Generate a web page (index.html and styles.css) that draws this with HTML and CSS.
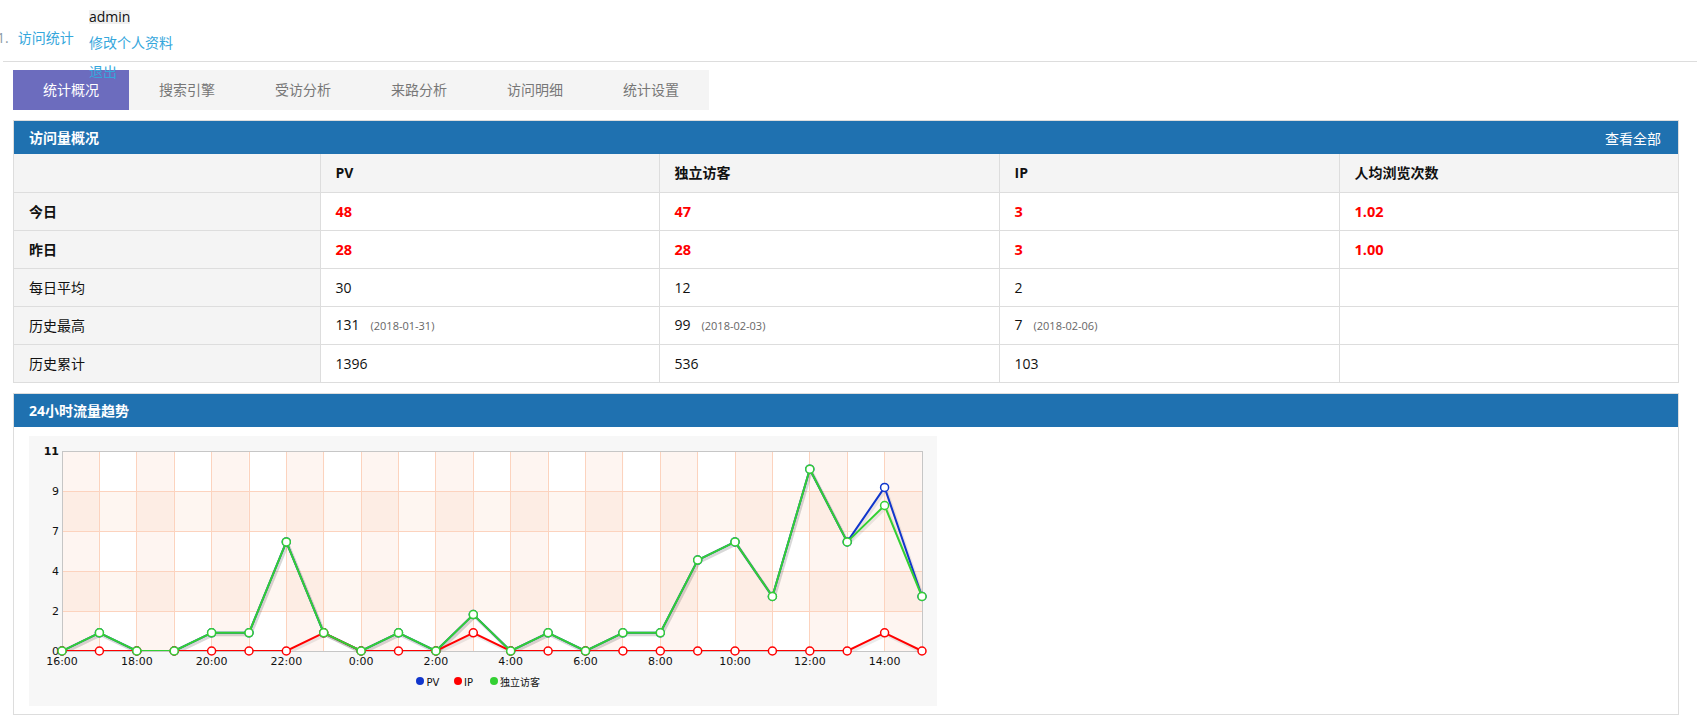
FILE: index.html
```html
<!DOCTYPE html>
<html lang="zh-CN">
<head>
<meta charset="utf-8">
<title>访问统计</title>
<link rel="stylesheet" href="styles.css">
</head>
<body>
<header class="topbar">
  <nav class="mainnav"><span class="idx">1.</span><a href="#">访问统计</a></nav>
  <ul class="usermenu">
    <li><span class="uname">admin</span></li>
    <li><a href="#">修改个人资料</a></li>
    <li><a href="#">退出</a></li>
  </ul>
</header>
<div class="wrap">
  <div class="tabs">
    <a class="tab active" href="#">统计概况</a>
    <a class="tab" href="#">搜索引擎</a>
    <a class="tab" href="#">受访分析</a>
    <a class="tab" href="#">来路分析</a>
    <a class="tab" href="#">访问明细</a>
    <a class="tab" href="#">统计设置</a>
  </div>

  <section class="panel">
    <div class="panel-hd"><h3>访问量概况</h3><a href="#">查看全部</a></div>
    <table class="stats">
      <colgroup><col class="c1"><col class="c2"><col class="c3"><col class="c4"><col class="c5"></colgroup>
      <tr class="head"><th></th><th>PV</th><th>独立访客</th><th>IP</th><th>人均浏览次数</th></tr>
      <tr><th class="label">今日</th><td class="hot">48</td><td class="hot">47</td><td class="hot">3</td><td class="hot">1.02</td></tr>
      <tr><th class="label">昨日</th><td class="hot">28</td><td class="hot">28</td><td class="hot">3</td><td class="hot">1.00</td></tr>
      <tr><td class="label">每日平均</td><td>30</td><td>12</td><td>2</td><td></td></tr>
      <tr><td class="label">历史最高</td><td>131<small class="date">(2018-01-31)</small></td><td>99<small class="date">(2018-02-03)</small></td><td>7<small class="date">(2018-02-06)</small></td><td></td></tr>
      <tr><td class="label">历史累计</td><td>1396</td><td>536</td><td>103</td><td></td></tr>
    </table>
  </section>

  <section class="panel">
    <div class="panel-hd"><h3>24小时流量趋势</h3></div>
    <div class="panel-bd">
      <div class="chart">
        <svg width="908" height="270" viewBox="0 0 908 270" xmlns="http://www.w3.org/2000/svg">
          <defs>
            <pattern id="vstripe" x="33" y="0" width="74.7826" height="270" patternUnits="userSpaceOnUse">
              <rect x="0" y="0" width="37.3913" height="270" fill="#f7a27a" fill-opacity="0.1"/>
            </pattern>
            <clipPath id="plotclip"><rect x="33" y="15" width="861" height="200"/></clipPath>
          </defs>
          <rect x="33" y="15" width="861" height="200" fill="#fff"/>
          <rect x="33" y="15" width="861" height="200" fill="url(#vstripe)"/>
          <rect x="33" y="55" width="861" height="40" fill="#f7a27a" fill-opacity="0.1"/>
          <rect x="33" y="135" width="861" height="40" fill="#f7a27a" fill-opacity="0.1"/>
          <path class="grid" d="M70.5 15V215M107.5 15V215M145.5 15V215M182.5 15V215M220.5 15V215M257.5 15V215M294.5 15V215M332.5 15V215M369.5 15V215M406.5 15V215M444.5 15V215M481.5 15V215M519.5 15V215M556.5 15V215M593.5 15V215M631.5 15V215M668.5 15V215M706.5 15V215M743.5 15V215M780.5 15V215M818.5 15V215M855.5 15V215M33 55.5H893M33 95.5H893M33 135.5H893M33 175.5H893"/>
          <rect class="axis" x="33.5" y="15.5" width="860" height="200"/>

          <g class="ylab">
            <text x="30" y="219">0</text>
            <text x="30" y="179">2</text>
            <text x="30" y="139">4</text>
            <text x="30" y="99">7</text>
            <text x="30" y="59">9</text>
            <text x="30" y="19" class="bold">11</text>
          </g>
          <g class="xlab">
            <text x="33" y="229">16:00</text>
            <text x="107.8" y="229">18:00</text>
            <text x="182.6" y="229">20:00</text>
            <text x="257.3" y="229">22:00</text>
            <text x="332.1" y="229">0:00</text>
            <text x="406.9" y="229">2:00</text>
            <text x="481.7" y="229">4:00</text>
            <text x="556.5" y="229">6:00</text>
            <text x="631.3" y="229">8:00</text>
            <text x="706" y="229">10:00</text>
            <text x="780.8" y="229">12:00</text>
            <text x="855.6" y="229">14:00</text>
          </g>

          <g clip-path="url(#plotclip)">
            <g class="shadow" transform="translate(1.5,2)">
              <polyline points="33,215 70.4,196.8 107.8,215 145.2,215 182.6,196.8 220,196.8 257.3,105.9 294.7,196.8 332.1,215 369.5,196.8 406.9,215 444.3,178.6 481.7,215 519.1,196.8 556.5,215 593.9,196.8 631.3,196.8 668.7,124.1 706,105.9 743.4,160.5 780.8,33.2 818.2,105.9 855.6,51.4 893,160.5"/>
              <polyline points="33,215 70.4,215 107.8,215 145.2,215 182.6,215 220,215 257.3,215 294.7,196.8 332.1,215 369.5,215 406.9,215 444.3,196.8 481.7,215 519.1,215 556.5,215 593.9,215 631.3,215 668.7,215 706,215 743.4,215 780.8,215 818.2,215 855.6,196.8 893,215"/>
              <polyline points="33,215 70.4,196.8 107.8,215 145.2,215 182.6,196.8 220,196.8 257.3,105.9 294.7,196.8 332.1,215 369.5,196.8 406.9,215 444.3,178.6 481.7,215 519.1,196.8 556.5,215 593.9,196.8 631.3,196.8 668.7,124.1 706,105.9 743.4,160.5 780.8,33.2 818.2,105.9 855.6,69.5 893,160.5"/>
            </g>
            <polyline class="line pv" points="33,215 70.4,196.8 107.8,215 145.2,215 182.6,196.8 220,196.8 257.3,105.9 294.7,196.8 332.1,215 369.5,196.8 406.9,215 444.3,178.6 481.7,215 519.1,196.8 556.5,215 593.9,196.8 631.3,196.8 668.7,124.1 706,105.9 743.4,160.5 780.8,33.2 818.2,105.9 855.6,51.4 893,160.5"/>
          </g>
          <g class="dots pv">
            <circle cx="33" cy="215" r="4"/><circle cx="70.4" cy="196.8" r="4"/><circle cx="107.8" cy="215" r="4"/><circle cx="145.2" cy="215" r="4"/><circle cx="182.6" cy="196.8" r="4"/><circle cx="220" cy="196.8" r="4"/><circle cx="257.3" cy="105.9" r="4"/><circle cx="294.7" cy="196.8" r="4"/><circle cx="332.1" cy="215" r="4"/><circle cx="369.5" cy="196.8" r="4"/><circle cx="406.9" cy="215" r="4"/><circle cx="444.3" cy="178.6" r="4"/><circle cx="481.7" cy="215" r="4"/><circle cx="519.1" cy="196.8" r="4"/><circle cx="556.5" cy="215" r="4"/><circle cx="593.9" cy="196.8" r="4"/><circle cx="631.3" cy="196.8" r="4"/><circle cx="668.7" cy="124.1" r="4"/><circle cx="706" cy="105.9" r="4"/><circle cx="743.4" cy="160.5" r="4"/><circle cx="780.8" cy="33.2" r="4"/><circle cx="818.2" cy="105.9" r="4"/><circle cx="855.6" cy="51.4" r="4"/><circle cx="893" cy="160.5" r="4"/>
          </g>
          <g clip-path="url(#plotclip)">
            <polyline class="line ip" points="33,215 70.4,215 107.8,215 145.2,215 182.6,215 220,215 257.3,215 294.7,196.8 332.1,215 369.5,215 406.9,215 444.3,196.8 481.7,215 519.1,215 556.5,215 593.9,215 631.3,215 668.7,215 706,215 743.4,215 780.8,215 818.2,215 855.6,196.8 893,215"/>
          </g>
          <g class="dots ip">
            <circle cx="33" cy="215" r="4"/><circle cx="70.4" cy="215" r="4"/><circle cx="107.8" cy="215" r="4"/><circle cx="145.2" cy="215" r="4"/><circle cx="182.6" cy="215" r="4"/><circle cx="220" cy="215" r="4"/><circle cx="257.3" cy="215" r="4"/><circle cx="294.7" cy="196.8" r="4"/><circle cx="332.1" cy="215" r="4"/><circle cx="369.5" cy="215" r="4"/><circle cx="406.9" cy="215" r="4"/><circle cx="444.3" cy="196.8" r="4"/><circle cx="481.7" cy="215" r="4"/><circle cx="519.1" cy="215" r="4"/><circle cx="556.5" cy="215" r="4"/><circle cx="593.9" cy="215" r="4"/><circle cx="631.3" cy="215" r="4"/><circle cx="668.7" cy="215" r="4"/><circle cx="706" cy="215" r="4"/><circle cx="743.4" cy="215" r="4"/><circle cx="780.8" cy="215" r="4"/><circle cx="818.2" cy="215" r="4"/><circle cx="855.6" cy="196.8" r="4"/><circle cx="893" cy="215" r="4"/>
          </g>
          <g clip-path="url(#plotclip)">
            <polyline class="line uv" points="33,215 70.4,196.8 107.8,215 145.2,215 182.6,196.8 220,196.8 257.3,105.9 294.7,196.8 332.1,215 369.5,196.8 406.9,215 444.3,178.6 481.7,215 519.1,196.8 556.5,215 593.9,196.8 631.3,196.8 668.7,124.1 706,105.9 743.4,160.5 780.8,33.2 818.2,105.9 855.6,69.5 893,160.5"/>
          </g>
          <g class="dots uv">
            <circle cx="33" cy="215" r="4"/><circle cx="70.4" cy="196.8" r="4"/><circle cx="107.8" cy="215" r="4"/><circle cx="145.2" cy="215" r="4"/><circle cx="182.6" cy="196.8" r="4"/><circle cx="220" cy="196.8" r="4"/><circle cx="257.3" cy="105.9" r="4"/><circle cx="294.7" cy="196.8" r="4"/><circle cx="332.1" cy="215" r="4"/><circle cx="369.5" cy="196.8" r="4"/><circle cx="406.9" cy="215" r="4"/><circle cx="444.3" cy="178.6" r="4"/><circle cx="481.7" cy="215" r="4"/><circle cx="519.1" cy="196.8" r="4"/><circle cx="556.5" cy="215" r="4"/><circle cx="593.9" cy="196.8" r="4"/><circle cx="631.3" cy="196.8" r="4"/><circle cx="668.7" cy="124.1" r="4"/><circle cx="706" cy="105.9" r="4"/><circle cx="743.4" cy="160.5" r="4"/><circle cx="780.8" cy="33.2" r="4"/><circle cx="818.2" cy="105.9" r="4"/><circle cx="855.6" cy="69.5" r="4"/><circle cx="893" cy="160.5" r="4"/>
          </g>

          <g class="legend">
            <circle cx="391" cy="245" r="4" fill="#1136cc"/><text x="397.5" y="250">PV</text>
            <circle cx="429" cy="245" r="4" fill="#ff0000"/><text x="435" y="250">IP</text>
            <circle cx="465" cy="245" r="4" fill="#33d033"/><text x="471" y="250" class="cjk">独立访客</text>
          </g>
        </svg>
      </div>
    </div>
  </section>
</div>
</body>
</html>
```

FILE: styles.css
```css
html, body {
  margin: 0;
  padding: 0;
  background: #fff;
}

body {
  font-family: "Open Sans", "Noto Sans CJK SC", sans-serif;
  font-size: 14px;
  color: #222;
}

a {
  color: #35a7dc;
  text-decoration: none;
}

/* top bar */
.topbar {
  position: relative;
  height: 61px;
  margin-left: 3px;
  border-bottom: 1px solid #dddddd;
}

.mainnav {
  padding-top: 29px;
  margin-left: -6px;
  line-height: 17px;
  white-space: nowrap;
}

.idx {
  color: #8c9aa6;
  margin-right: 9px;
}

.usermenu {
  position: absolute;
  left: 86px;
  top: 0;
  z-index: 2;
  margin: 0;
  padding: 10px 0 0;
  list-style: none;
  line-height: 20px;
  white-space: nowrap;
}

.usermenu li + li {
  margin-top: 9px;
}

.usermenu li:first-child {
  line-height: 14px;
  height: 14px;
}

.uname {
  display: inline-block;
  height: 14px;
  line-height: 14px;
  background: #f0f0f0;
  color: #111;
}

/* page body */
.wrap {
  padding: 8px 18px 0 13px;
}

.tabs {
  display: flex;
  width: 696px;
  background: #f4f4f4;
}

.tab {
  width: 116px;
  height: 40px;
  line-height: 40px;
  text-align: center;
  color: #777;
  font-size: 14px;
}

.tab.active {
  background: #6c6cbe;
  color: #fff;
}

.panel {
  margin-top: 10px;
  border: 1px solid #dddddd;
  background: #fff;
}

.panel-hd {
  display: flex;
  align-items: center;
  justify-content: space-between;
  height: 33px;
  padding: 0 17px 0 15px;
  background: #1f71b0;
  color: #fff;
}

.panel-hd h3 {
  margin: 0;
  font-size: 14px;
  font-weight: bold;
  line-height: 20px;
}

.panel-hd a {
  color: #fff;
  font-size: 14px;
}

/* stats table */
.stats {
  width: 100%;
  border-collapse: collapse;
  border-style: hidden;
  table-layout: fixed;
}

.stats .c1 { width: 306px; }
.stats .c2 { width: 339px; }
.stats .c3 { width: 340px; }
.stats .c4 { width: 340px; }

.stats th,
.stats td {
  height: 37px;
  padding: 0 15px;
  border: 1px solid #dddddd;
  text-align: left;
  font-size: 14px;
  line-height: 20px;
  color: #111;
  white-space: nowrap;
}

.stats th {
  font-weight: bold;
}

.stats tr.head th {
  height: 38px;
  background: #f4f4f4;
}

.stats .label {
  background: #f4f4f4;
}

.stats td.hot {
  color: #ff0000;
  font-weight: bold;
  font-size: 14.5px;
}

.date {
  margin-left: 11px;
  font-size: 11px;
  color: #666;
}

/* chart */
.panel-bd {
  padding: 9px 15px 8px;
}

.chart {
  width: 908px;
  height: 270px;
  background: #f7f7f7;
}

.chart svg {
  display: block;
}

.chart .grid {
  fill: none;
  stroke: #fcd3be;
  stroke-width: 1;
}

.chart .axis {
  fill: none;
  stroke: #c6c6c6;
  stroke-width: 1;
}

.chart text {
  font-family: "DejaVu Sans", Verdana, sans-serif;
  font-size: 11px;
  fill: #111;
}

.chart .ylab text {
  text-anchor: end;
}

.chart .ylab text.bold {
  font-weight: bold;
}

.chart .xlab text {
  text-anchor: middle;
}

.chart .shadow polyline {
  fill: none;
  stroke: #000;
  stroke-opacity: 0.08;
  stroke-width: 3;
  stroke-linejoin: round;
}

.chart .line {
  fill: none;
  stroke-width: 2;
  stroke-linejoin: round;
}

.chart .line.pv { stroke: #1136cc; }
.chart .line.ip { stroke: #ff0000; }
.chart .line.uv { stroke: #33d033; }

.chart .dots circle {
  fill: #fff;
  stroke-width: 1.5;
}

.chart .dots.pv circle { stroke: #1136cc; }
.chart .dots.ip circle { stroke: #ff0000; }
.chart .dots.uv circle { stroke: #33d033; }

.chart .legend text {
  font-size: 10px;
}

.chart .legend text.cjk {
  font-family: "Noto Sans CJK SC", sans-serif;
}
```
